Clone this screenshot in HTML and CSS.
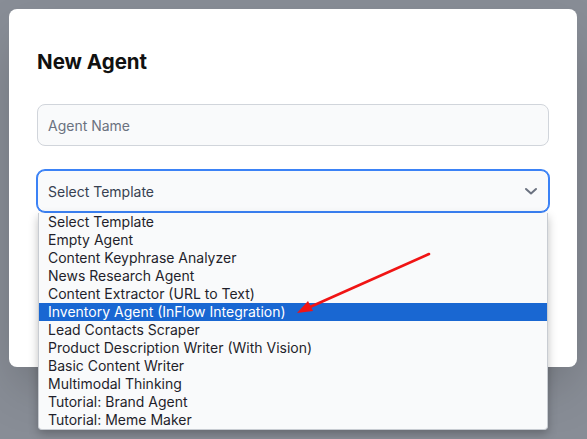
FILE: index.html
```html
<!DOCTYPE html>
<html>
<head>
<meta charset="utf-8">
<link rel="stylesheet" href="styles.css">
</head>
<body>
<div class="overlay">
  <div class="card">
    <h2 class="title">New Agent</h2>
    <div class="field">
      <div class="input"><span class="placeholder">Agent Name</span></div>
    </div>
    <div class="field select-field">
      <div class="select">
        <span>Select Template</span>
        <svg class="chev" width="14" height="14" viewBox="0 0 14 14"><path d="M2 5l5 4.5 5-4.5" fill="none" stroke="#6b7280" stroke-width="2" stroke-linecap="round" stroke-linejoin="round"/></svg>
      </div>
      <ul class="menu">
        <li>Select Template</li>
        <li>Empty Agent</li>
        <li>Content Keyphrase Analyzer</li>
        <li>News Research Agent</li>
        <li>Content Extractor (URL to Text)</li>
        <li class="active">Inventory Agent (InFlow Integration)</li>
        <li>Lead Contacts Scraper</li>
        <li>Product Description Writer (With Vision)</li>
        <li>Basic Content Writer</li>
        <li>Multimodal Thinking</li>
        <li>Tutorial: Brand Agent</li>
        <li>Tutorial: Meme Maker</li>
      </ul>
    </div>
  </div>
</div>
<svg class="arrow" width="587" height="439" viewBox="0 0 587 439">
  <line x1="429" y1="254" x2="310" y2="307" stroke="#f01414" stroke-width="2.6" stroke-linecap="round"/>
  <polygon points="297,313 308,301 313,311" fill="#f01414"/>
</svg>
</body>
</html>
```
FILE: styles.css
```css
html, body {
  margin: 0;
  padding: 0;
}
body {
  width: 587px;
  height: 439px;
  background: #888d96;
  font-family: Inter, "Liberation Sans", sans-serif;
  overflow: hidden;
  position: relative;
}
.overlay {
  padding: 9px 10px 0 9px;
}
.card {
  box-sizing: border-box;
  width: 568px;
  height: 358px;
  background: #ffffff;
  border-radius: 8px;
  padding: 39px 28px 0 28px;
  box-shadow: 0 25px 50px -12px rgba(0, 0, 0, 0.25);
}
.title {
  margin: 0;
  font-size: 20.5px;
  line-height: 28px;
  font-weight: 700;
  color: #111111;
}
.field {
  margin-top: 28px;
}
.select-field {
  margin-top: 24px;
  position: relative;
}
.input, .select {
  box-sizing: border-box;
  width: 512px;
  height: 42px;
  border-radius: 8px;
  background: #f9fafb;
  border: 1px solid #d1d5db;
  padding: 0 10px;
  display: flex;
  align-items: center;
  font-size: 14px;
}
.placeholder {
  color: #6b7280;
}
.select {
  border-color: #3b82f6;
  box-shadow: 0 0 0 1px #3b82f6;
  color: #374151;
  justify-content: space-between;
  padding-right: 10px;
}
.chev {
  display: block;
}
.menu {
  position: absolute;
  left: 1px;
  top: 43px;
  width: 510px;
  margin: 0;
  padding: 0;
  list-style: none;
  background: #f9fafb;
  border: 1px solid #c8ccd2;
  border-top: none;
  border-radius: 0 0 4px 4px;
  box-sizing: border-box;
  box-shadow: 0 4px 10px rgba(0, 0, 0, 0.25);
}
.menu li {
  height: 18px;
  line-height: 18px;
  padding-left: 9px;
  font-size: 14px;
  color: #1f1f2b;
  white-space: nowrap;
}
.menu li.active {
  background: #1967d2;
  color: #ffffff;
}
.arrow {
  position: absolute;
  left: 0;
  top: 0;
  pointer-events: none;
}
```
